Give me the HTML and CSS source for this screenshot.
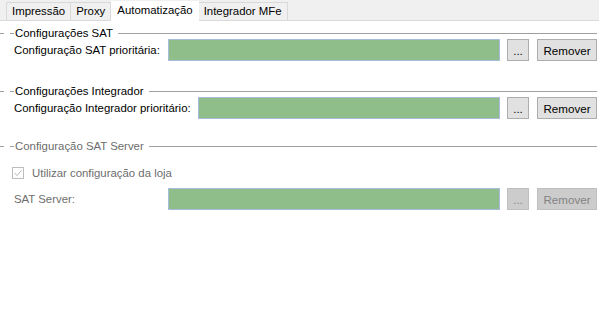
FILE: index.html
```html
<!DOCTYPE html>
<html lang="pt">
<head>
  <meta charset="UTF-8">
  <title>Automatização</title>
  <link rel="stylesheet" href="styles.css">
</head>
<body>
  <!-- Tab strip -->
  <div class="tabs">
    <div class="tab">Impressão</div>
    <div class="tab">Proxy</div>
    <div class="tab active">Automatização</div>
    <div class="tab">Integrador MFe</div>
  </div>

  <div class="page">
    <!-- SAT -->
    <div class="group sat">
      <div class="group-title"><span>Configurações SAT</span></div>
      <div class="row">
        <label class="label">Configuração SAT prioritária:</label>
        <div class="field"></div>
        <button class="btn small">...</button>
        <button class="btn">Remover</button>
      </div>
    </div>

    <!-- Integrador -->
    <div class="group integrador">
      <div class="group-title"><span>Configurações Integrador</span></div>
      <div class="row">
        <label class="label wide">Configuração Integrador prioritário:</label>
        <div class="field"></div>
        <button class="btn small">...</button>
        <button class="btn">Remover</button>
      </div>
    </div>

    <!-- SAT Server (disabled) -->
    <div class="group server disabled">
      <div class="group-title"><span>Configuração SAT Server</span></div>
      <div class="check-row">
        <svg class="check" width="12" height="12" viewBox="0 0 12 12">
          <rect x="0.5" y="0.5" width="11" height="11" fill="#fff" stroke="#bcbcbc"/>
          <path d="M2.5 6 L5 8.5 L9.5 3.5" fill="none" stroke="#b5b5b5" stroke-width="1"/>
        </svg>
        <span>Utilizar configuração da loja</span>
      </div>
      <div class="row">
        <label class="label">SAT Server:</label>
        <div class="field"></div>
        <button class="btn small" disabled>...</button>
        <button class="btn" disabled>Remover</button>
      </div>
    </div>
  </div>
</body>
</html>
```

FILE: styles.css
```css
body {
  margin: 0;
  font-family: "Liberation Sans", Arial, sans-serif;
  font-size: 11.4px;
  color: #000;
  background: #fff;
}

/* tabs */
.tabs {
  display: flex;
  align-items: flex-end;
  height: 20px;
  padding-left: 6px;
  background: #f0f0f0;
  border-bottom: 1px solid #dadada;
}

.tab {
  height: 17px;
  line-height: 17px;
  padding: 0 5px;
  border: 1px solid #d9d9d9;
  border-bottom: none;
  border-left: none;
  background: #f0f0f0;
}

.tab:first-child {
  border-left: 1px solid #d9d9d9;
}

.tab.active {
  height: 20px;
  line-height: 19px;
  margin-bottom: -1px;
  padding: 0 6px;
  background: #fff;
  border: none;
}

/* groups */
.page {
  padding-right: 2px;
}

.group.sat {
  margin-top: 6px;
}

.group.integrador {
  margin-top: 24px;
}

.group.server {
  margin-top: 21px;
}

.group-title {
  display: flex;
  align-items: center;
  height: 12px;
  white-space: nowrap;
}

.group-title::before {
  content: "";
  width: 4px;
  border-top: 1px solid #a0a0a0;
  margin-right: 6px;
}

.group-title span {
  display: flex;
  align-items: center;
}

.group-title span::before {
  content: "";
  width: 4px;
  border-top: 1px solid #a0a0a0;
  margin-right: 1px;
}

.group-title::after {
  content: "";
  flex: 1;
  border-top: 1px solid #a0a0a0;
  margin-left: 5px;
}

.row {
  display: flex;
  align-items: center;
  height: 22px;
  padding-left: 14px;
}

.label {
  width: 154px;
  flex-shrink: 0;
  white-space: nowrap;
}

.label.wide {
  width: 184px;
}

.field {
  flex: 1;
  height: 20px;
  background: #8fbe8a;
  border: 1px solid #a7bcdc;
  margin-right: 7px;
}

.btn {
  font-family: inherit;
  font-size: 11.6px;
  height: 22px;
  width: 60px;
  padding: 0;
  background: #e1e1e1;
  border: 1px solid #adadad;
  color: #000;
}

.btn.small {
  width: 22px;
  margin-right: 8px;
}

.btn:disabled {
  background: #cccccc;
  border-color: #bfbfbf;
  color: #838383;
}

.disabled .group-title span,
.disabled .check-row,
.disabled .label {
  color: #6d6d6d;
}

.check-row {
  display: flex;
  align-items: center;
  height: 14px;
  margin-top: 14px;
  padding-left: 12px;
}

.check {
  margin-right: 8px;
}

.disabled .row {
  margin-top: 8px;
}
```
